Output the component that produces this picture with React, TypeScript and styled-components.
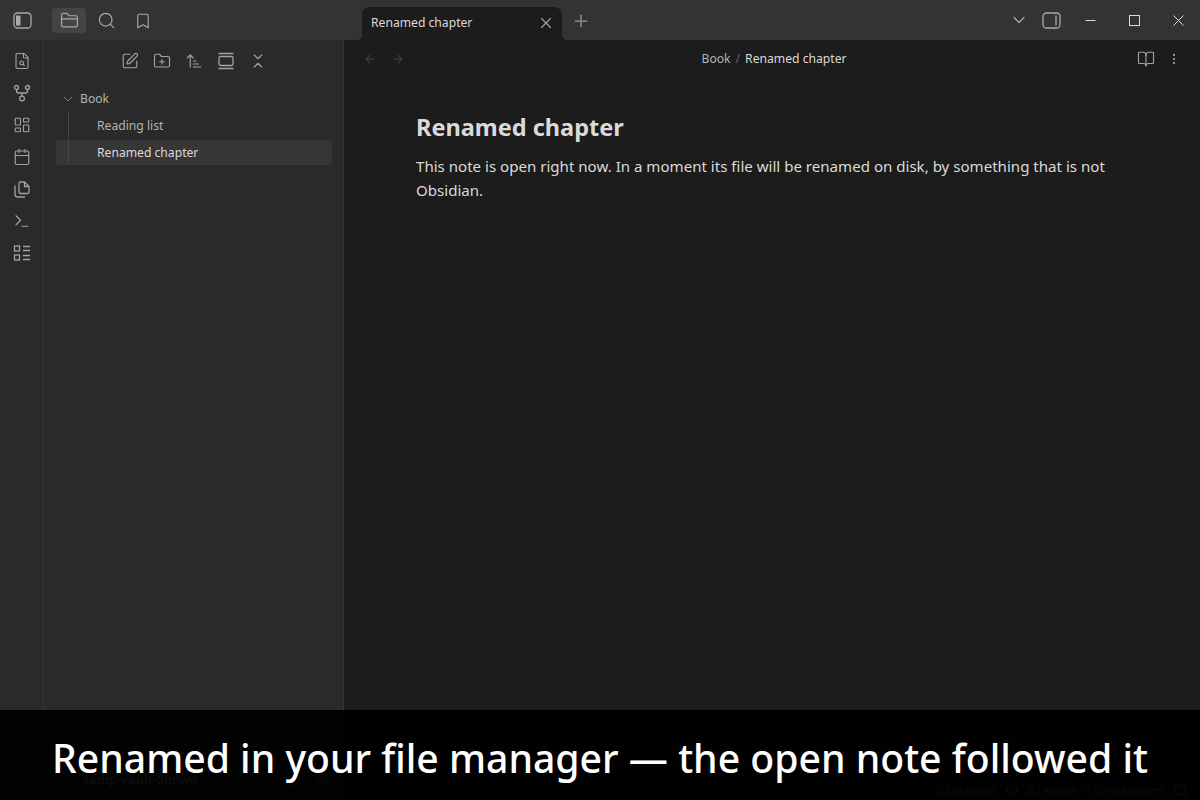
import React from 'react'
import styled, { createGlobalStyle } from 'styled-components'
import {
  ArrowLeft, ArrowRight, ArrowUpNarrowWide, Bookmark, BookOpen, Calendar, ChevronDown, ChevronsDownUp,
  ChevronsUpDown, CodeXml, FileSearch, FolderClosed, FolderPlus, HelpCircle, LayoutDashboard, MoreVertical, Plus, Search,
  Settings, SquarePen, Terminal, X,
} from 'lucide-react'

const GlobalStyle = createGlobalStyle`
  html, body { margin: 0; padding: 0; height: 100%; background: #1c1c1c; overflow: hidden; }
  #root { height: 100%; }
  * { box-sizing: border-box; }
`

const Window = styled.div`
  position: relative;
  width: 1200px;
  height: 800px;
  display: flex;
  flex-direction: column;
  font-family: "Noto Sans", "Open Sans", sans-serif;
  color: #dadada;
  overflow: hidden;
`
const TitleBar = styled.div`
  height: 40px;
  flex: none;
  display: flex;
  background: #333333;
`
const LeftTools = styled.div`
  width: 362px;
  flex: none;
  display: flex;
  align-items: center;
  padding: 7px 0 6px 8px;
`
const TitleIcon = styled.div<{ $active?: boolean; $width?: number; $gap?: number }>`
  width: ${p => p.$width ?? 28}px;
  height: 25px;
  margin-right: ${p => p.$gap ?? 0}px;
  display: flex;
  align-items: center;
  justify-content: center;
  border-radius: 4px;
  color: #a9a9a9;
  background: ${p => (p.$active ? '#444444' : 'transparent')};
`
const Tab = styled.div`
  position: relative;
  width: 200px;
  margin-top: 7px;
  flex: none;
  display: flex;
  align-items: center;
  justify-content: space-between;
  padding: 0 7px 2px 9px;
  background: #1c1c1c;
  border-radius: 8px 8px 0 0;
  font-size: 12.15px;
  color: #dadada;
  &::before, &::after {
    content: '';
    position: absolute;
    bottom: 0;
    width: 6px;
    height: 6px;
  }
  &::before { left: -6px; background: radial-gradient(circle at 0 0, transparent 6px, #1c1c1c 6.5px); }
  &::after { right: -6px; background: radial-gradient(circle at 100% 0, transparent 6px, #1c1c1c 6.5px); }
`
const NewTab = styled.div`
  margin-left: 8px;
  width: 22px;
  padding-top: 2px;
  display: flex;
  align-items: center;
  justify-content: center;
  color: #9a9a9a;
`
const RightTools = styled.div`
  margin-left: auto;
  display: flex;
  align-items: center;
`
const WinButton = styled.div`
  width: 44px;
  height: 40px;
  display: flex;
  align-items: center;
  justify-content: center;
  color: #dcdcdc;
`
const Body = styled.div`
  flex: 1;
  min-height: 0;
  display: flex;
`
const Ribbon = styled.div`
  width: 44px;
  flex: none;
  display: flex;
  flex-direction: column;
  align-items: center;
  gap: 14px;
  padding-top: 12px;
  background: #2a2a2a;
  border-right: 1px solid #363636;
  color: #a3a3a3;
`
const RibbonItem = styled.div`
  width: 18px;
  height: 18px;
  display: flex;
  align-items: center;
  justify-content: center;
`
const Sidebar = styled.div`
  width: 300px;
  flex: none;
  display: flex;
  flex-direction: column;
  background: #2a2a2a;
  border-right: 1px solid #363636;
`
const NavHeader = styled.div`
  height: 42px;
  display: flex;
  align-items: center;
  justify-content: center;
  gap: 14px;
  color: #a3a3a3;
`
const Tree = styled.div`
  flex: 1;
  padding: 4px 11px 0 12px;
  font-size: 12.15px;
`
const FolderRow = styled.div`
  height: 25px;
  display: flex;
  align-items: center;
  gap: 4px;
  padding-left: 4px;
  margin-bottom: 2px;
  color: #b3b3b3;
`
const Children = styled.div`
  display: flex;
  flex-direction: column;
  gap: 2px;
`
const FileRow = styled.div<{ $active?: boolean }>`
  position: relative;
  height: 25px;
  display: flex;
  align-items: center;
  padding-left: 41px;
  border-radius: 4px;
  color: ${p => (p.$active ? '#dadada' : '#b3b3b3')};
  background: ${p => (p.$active ? '#363636' : 'transparent')};
  &::before {
    content: '';
    position: absolute;
    left: 12px;
    top: -1px;
    bottom: 0;
    width: 1px;
    background: #484848;
  }
`
const VaultFooter = styled.div`
  height: 42px;
  flex: none;
  display: flex;
  align-items: center;
  padding: 0 13px 0 16px;
  color: #b3b3b3;
  font-size: 12.5px;
`
const VaultName = styled.span`
  margin-left: 8px;
  font-weight: 700;
  flex: 1;
`
const VaultActions = styled.div`
  display: flex;
  align-items: center;
  gap: 14px;
`
const Main = styled.div`
  flex: 1;
  min-width: 0;
  display: flex;
  flex-direction: column;
  background: #1c1c1c;
`
const ViewHeader = styled.div`
  height: 38px;
  flex: none;
  display: flex;
  align-items: center;
  justify-content: space-between;
  padding: 0 19px;
`
const NavArrows = styled.div`
  display: flex;
  gap: 14px;
  color: #4f4f4f;
`
const Crumbs = styled.div`
  display: flex;
  gap: 5px;
  padding: 0 0 2px 6px;
  font-size: 12.15px;
  color: #b3b3b3;
`
const CrumbCurrent = styled.span`
  color: #dadada;
`
const CrumbSep = styled.span`
  color: #666666;
`
const ViewActions = styled.div`
  display: flex;
  align-items: center;
  gap: 12px;
  color: #a3a3a3;
`
const Note = styled.div`
  padding: 31px 72px 0;
`
const NoteTitle = styled.h1`
  margin: 0 0 9px;
  font-size: 23.5px;
  line-height: 36px;
  font-weight: 700;
  color: #dadada;
`
const NoteText = styled.p`
  margin: 0;
  font-size: 15.08px;
  line-height: 24px;
  color: #dadada;
`
const StatusBar = styled.div`
  position: absolute;
  right: 13px;
  bottom: 3px;
  display: flex;
  align-items: center;
  gap: 9px;
  font-size: 11.4px;
  color: #b3b3b3;
`
const Caption = styled.div`
  position: absolute;
  left: 0;
  right: 0;
  bottom: 0;
  height: 90px;
  display: flex;
  align-items: center;
  justify-content: center;
  padding-top: 4px;
  background: rgba(0, 0, 0, 0.94);
  color: #ffffff;
  font-size: 39.15px;
  font-weight: 500;
`

const SidebarToggle = ({ right }: { right?: boolean }) => (
  <svg width="19" height="17" viewBox="0 0 19 17" fill="none" stroke="currentColor" strokeWidth="1.3">
    <rect x="1" y="1" width="17" height="15" rx="3.5" />
    {right
      ? <path d="M14 3.5v10" />
      : <rect x="3" y="3.5" width="4.5" height="10" fill="currentColor" stroke="none" />}
  </svg>
)

const Graph = () => (
  <svg width="18" height="18" viewBox="0 0 18 18" fill="none" stroke="currentColor" strokeWidth="1.3">
    <circle cx="3.5" cy="3.5" r="2" />
    <circle cx="14.5" cy="3.5" r="2" />
    <circle cx="9" cy="14.5" r="2.4" />
    <path d="M3.5 5.5V7c0 1.3.8 2 2 2h7c1.2 0 2-.7 2-2V5.5M9 9v3" />
  </svg>
)

const Pages = () => (
  <svg width="18" height="18" viewBox="0 0 18 18" fill="none" stroke="currentColor" strokeWidth="1.3">
    <path d="M6 3.5A1.5 1.5 0 0 1 7.5 2h4L16 6.5V12a1.5 1.5 0 0 1-1.5 1.5h-7A1.5 1.5 0 0 1 6 12Z" />
    <path d="M11.5 2v4.5H16" />
    <path d="M2 5.5v9A2.5 2.5 0 0 0 4.500 17H12" />
  </svg>
)

const Checklist = () => (
  <svg width="18" height="18" viewBox="0 0 18 18" fill="none" stroke="currentColor" strokeWidth="1.3">
    <rect x="1.5" y="2" width="5" height="5" />
    <rect x="1.5" y="11" width="5" height="5" />
    <path d="M10 2.500h7M10 6.500h7M10 11.500h7M10 15.500h7" />
  </svg>
)

const Frame = () => (
  <svg width="18" height="18" viewBox="0 0 18 18" fill="none" stroke="currentColor" strokeWidth="1.3">
    <path d="M1.500 1.500h15M1.500 16.500h15" />
    <rect x="2" y="4.500" width="14" height="9" rx="1.500" />
  </svg>
)

const SyncOff = () => (
  <svg width="14" height="14" viewBox="0 0 14 14" fill="none" stroke="#e05252" strokeWidth="1.3">
    <rect x="2" y="2" width="10" height="10" rx="1.500" />
    <path d="M1 1l12 12" />
  </svg>
)

const tools = { size: 19, strokeWidth: 1.5 }
const slim = { size: 18, strokeWidth: 1.5 }

const ribbonIcons = [
  <FileSearch key="f" {...slim} />,
  <Graph key="g" />,
  <LayoutDashboard key="l" {...slim} />,
  <Calendar key="c" {...slim} />,
  <Pages key="p" />,
  <Terminal key="t" {...slim} />,
  <Checklist key="k" />,
]

export default function App() {
  return (
    <Window>
      <GlobalStyle />
      <TitleBar>
        <LeftTools>
          <TitleIcon $gap={16}><SidebarToggle /></TitleIcon>
          <TitleIcon $active $width={34} $gap={6}><FolderClosed {...tools} /></TitleIcon>
          <TitleIcon $gap={12}><Search {...tools} /></TitleIcon>
          <TitleIcon $width={22}><Bookmark {...slim} /></TitleIcon>
        </LeftTools>
        <Tab>
          Renamed chapter
          <X size={18} strokeWidth={1.5} color="#a9a9a9" />
        </Tab>
        <NewTab><Plus size={20} strokeWidth={1.5} /></NewTab>
        <RightTools>
          <TitleIcon $width={20} $gap={11}><ChevronDown size={20} strokeWidth={1.5} /></TitleIcon>
          <TitleIcon $width={22} $gap={6}><SidebarToggle right /></TitleIcon>
          <WinButton>
            <svg width="11" height="11" viewBox="0 0 11 11" stroke="currentColor"><path d="M0.5 5.5h10" /></svg>
          </WinButton>
          <WinButton>
            <svg width="11" height="11" viewBox="0 0 11 11" fill="none" stroke="currentColor"><rect x="0.5" y="0.5" width="10" height="10" /></svg>
          </WinButton>
          <WinButton>
            <svg width="11" height="11" viewBox="0 0 11 11" stroke="currentColor"><path d="M0.5 0.5l10 10M10.500 0.5l-10 10" /></svg>
          </WinButton>
        </RightTools>
      </TitleBar>
      <Body>
        <Ribbon>
          {ribbonIcons.map(icon => <RibbonItem key={icon.key}>{icon}</RibbonItem>)}
        </Ribbon>
        <Sidebar>
          <NavHeader>
            <SquarePen {...slim} />
            <FolderPlus {...slim} />
            <ArrowUpNarrowWide {...slim} />
            <Frame />
            <ChevronsDownUp {...slim} />
          </NavHeader>
          <Tree>
            <FolderRow><ChevronDown size={16} strokeWidth={1.5} color="#7a7a7a" />Book</FolderRow>
            <Children>
              <FileRow>Reading list</FileRow>
              <FileRow $active>Renamed chapter</FileRow>
            </Children>
          </Tree>
          <VaultFooter>
            <ChevronsUpDown size={16} strokeWidth={1.5} />
            <VaultName>temp-vault-5lnlwo</VaultName>
            <VaultActions>
              <HelpCircle size={16} strokeWidth={1.5} />
              <Settings size={16} strokeWidth={1.5} />
            </VaultActions>
          </VaultFooter>
        </Sidebar>
        <Main>
          <ViewHeader>
            <NavArrows>
              <ArrowLeft size={14} strokeWidth={1.5} />
              <ArrowRight size={14} strokeWidth={1.5} />
            </NavArrows>
            <Crumbs>
              <span>Book</span>
              <CrumbSep>/</CrumbSep>
              <CrumbCurrent>Renamed chapter</CrumbCurrent>
            </Crumbs>
            <ViewActions>
              <BookOpen {...slim} />
              <MoreVertical size={14} strokeWidth={1.8} />
            </ViewActions>
          </ViewHeader>
          <Note>
            <NoteTitle>Renamed chapter</NoteTitle>
            <NoteText>
              This note is open right now. In a moment its file will be renamed on disk, by something that is not Obsidian.
            </NoteText>
          </Note>
        </Main>
      </Body>
      <StatusBar>
        <span>0 backlinks</span>
        <CodeXml size={14} />
        <span>22 words</span>
        <span>110 characters</span>
        <SyncOff />
      </StatusBar>
      <Caption>Renamed in your file manager — the open note followed it</Caption>
    </Window>
  )
}
